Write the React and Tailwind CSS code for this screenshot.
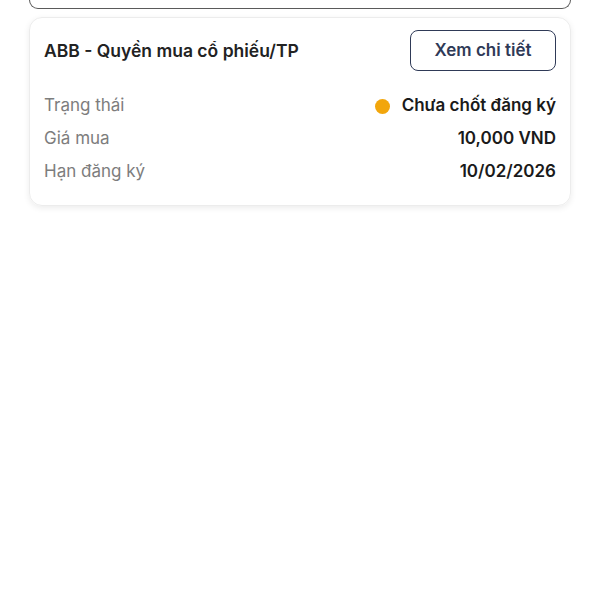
export default function App() {
  const rows = [
    { label: "Trạng thái", value: "Chưa chốt đăng ký", dot: true },
    { label: "Giá mua", value: "10,000 VND" },
    { label: "Hạn đăng ký", value: "10/02/2026" },
  ];
  return (
    <div className="w-[600px] h-[600px] bg-white px-[29px]" style={{ fontFamily: "Inter, 'Noto Sans', sans-serif" }}>
      <div className="h-[9px] border-x border-b border-[#5a5a5a] rounded-b-[10px]" />
      <div className="mt-[8px] rounded-[13px] border border-[#ececec] shadow-[0_2px_6px_rgba(0,0,0,0.08)] pl-[14px] pr-[14px] pt-[12px] pb-[23px]">
        <div className="flex items-center justify-between">
          <div className="text-[17.5px] font-semibold text-[#222222] mt-[2px]">ABB - Quyền mua cổ phiếu/TP</div>
          <button className="w-[146px] h-[41px] rounded-[8px] border-[1.5px] border-[#2f3a57] text-[17px] font-semibold text-[#2f3a57]">
            Xem chi tiết
          </button>
        </div>
        <div className="mt-[25px] flex flex-col gap-[13px]">
          {rows.map((r) => (
            <div key={r.label} className="flex items-center justify-between h-[20px]">
              <span className="text-[17px] text-[#7d7d7d]">{r.label}</span>
              <span className="flex items-center gap-[12px] text-[17px] font-semibold text-[#1a1a1a]">
                {r.dot && <span className="w-[15px] h-[15px] rounded-full bg-[#f2a60c]" />}
                {r.value}
              </span>
            </div>
          ))}
        </div>
      </div>
    </div>
  );
}
